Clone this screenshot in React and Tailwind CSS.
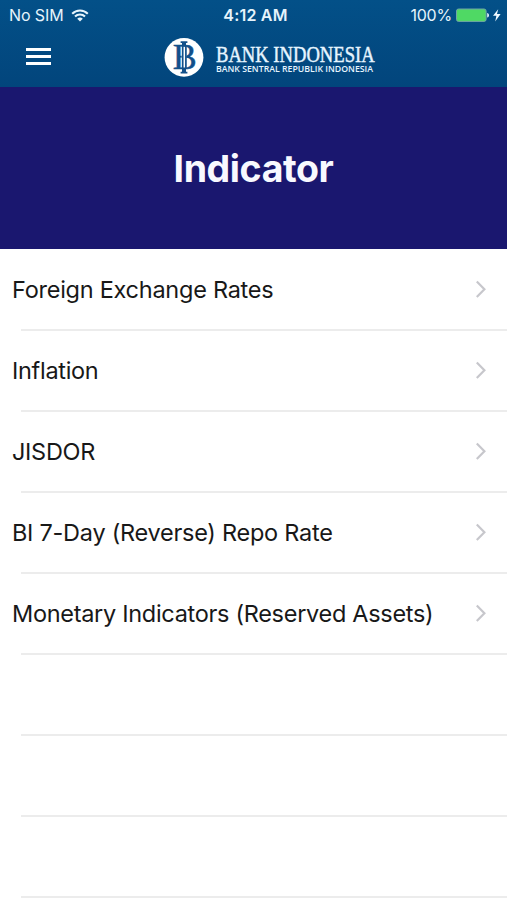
const rows = [
  { label: "Foreign Exchange Rates", fit: "tracking-[-0.26px]" },
  { label: "Inflation", fit: "tracking-[-0.3px]" },
  { label: "JISDOR", fit: "tracking-[-0.3px]" },
  { label: "BI 7-Day (Reverse) Repo Rate", fit: "tracking-[-0.26px]" },
  { label: "Monetary Indicators (Reserved Assets)", fit: "tracking-[-0.3px]" },
  { label: "" },
  { label: "" },
  { label: "" },
];

function Wifi() {
  return (
    <svg width="18" height="13" viewBox="0 0 18 13" fill="none" stroke="#e6f4fc" strokeWidth="2.1">
      <path d="M1.2 4.7a11 11 0 0 1 15.6 0" />
      <path d="M4 7.6a7 7 0 0 1 10 0" />
      <path d="M9 12.6 6.2 9.8a4 4 0 0 1 5.6 0z" fill="#e6f4fc" stroke="none" />
    </svg>
  );
}

function Battery() {
  return (
    <svg width="46" height="15" viewBox="0 0 46 15">
      <rect x="0.5" y="1" width="29.6" height="12.4" rx="2" fill="#4fd964" stroke="#6fa6a5" strokeWidth="1" />
      <path d="M31.2 5c2.4.6 2.4 4 0 4.6z" fill="#e6f4fc" />
      <path d="M42.2 1.2 37 7.8h3.4l-1.2 5.6 5.4-7.4h-3.6z" fill="#f2faff" />
    </svg>
  );
}

function Logo() {
  return (
    <svg width="220" height="46" viewBox="163 33 220 46" fill="#e6f5ff">
      <circle cx="184" cy="57.4" r="19.4" fill="#fff" />
      <text x="172.8" y="69.2" fontSize="35.5" fontFamily="Liberation Serif, serif" textLength="24" lengthAdjust="spacingAndGlyphs" fill="#12508a" stroke="#12508a" strokeWidth="0.4">B</text>
      <g fill="none" stroke="#12508a">
        <path d="M184.2 47.6v19.6" stroke="#fff" strokeWidth="5" />
        <path d="M180.6 42.1h6.8M180.6 72.6h6.8" strokeWidth="1.6" />
        <path d="M184 42.5v4M184 68.5v4" strokeWidth="4" />
        <path d="M182.7 46v23M185.9 46v23" strokeWidth="1.7" />
        <path d="M186 57h4" strokeWidth="1.3" />
      </g>
      <text x="216" y="61.5" fontSize="22.4" fontFamily="Liberation Serif, serif" textLength="158.6" lengthAdjust="spacingAndGlyphs" stroke="#e6f5ff" strokeWidth="0.45">BANK INDONESIA</text>
      <text x="216" y="72" fontSize="8.1" fontFamily="Open Sans, sans-serif" fontWeight="600" textLength="157" lengthAdjust="spacingAndGlyphs">BANK SENTRAL REPUBLIK INDONESIA</text>
    </svg>
  );
}

export default function App() {
  return (
    <div className="flex h-[900px] w-[507px] flex-col overflow-hidden bg-white font-['Inter',sans-serif]">
      <header className="h-[87px] shrink-0 bg-linear-to-b from-[#035088] to-[#02457c] text-[#e6f4fc]">
        <div className="grid h-[30px] grid-cols-[1fr_auto_1fr] items-center px-[9px] text-[16px] leading-[30px]">
          <div className="flex items-center gap-[7px]">
            <span className="tracking-[-0.1px]">No SIM</span>
            <Wifi />
          </div>
          <span className="pl-[4px] font-semibold tracking-[0.2px]">4:12 AM</span>
          <div className="-mr-[4px] flex items-center justify-end gap-[4px]">
            <span className="tracking-[-0.2px]">100%</span>
            <Battery />
          </div>
        </div>
        <div className="flex h-[57px] items-start">
          <div className="mt-[18px] ml-[26px] flex w-[25px] flex-col gap-[3.8px]">
            <div className="h-[3px] bg-white" />
            <div className="h-[3px] bg-white" />
            <div className="h-[3px] bg-white" />
          </div>
          <div className="mt-[3px] ml-[112px]">
            <Logo />
          </div>
        </div>
      </header>
      <section className="flex h-[162px] shrink-0 items-center justify-center bg-[#1a176f] pt-[2px]">
        <h1 className="text-[37.5px] font-bold tracking-[-0.4px] text-[#f8f9ff]">Indicator</h1>
      </section>
      <ul className="pt-px">
        {rows.map((row, i) => (
          <li key={i} className="flex h-[80.95px] flex-col">
            <div className="flex flex-1 items-center justify-between pr-[20px] pl-[12px] text-[23.5px] text-[#181818]">
              <span className={row.fit}>{row.label}</span>
              {row.label && (
                <svg width="12" height="19" viewBox="0 0 12 19" fill="none" stroke="#c7c7cc" strokeWidth="2.2">
                  <path d="M1.8 1.6l7.6 7.7-7.6 7.7" />
                </svg>
              )}
            </div>
            <div className="ml-[21px] h-[2px] bg-[#ececec]" />
          </li>
        ))}
      </ul>
    </div>
  );
}
